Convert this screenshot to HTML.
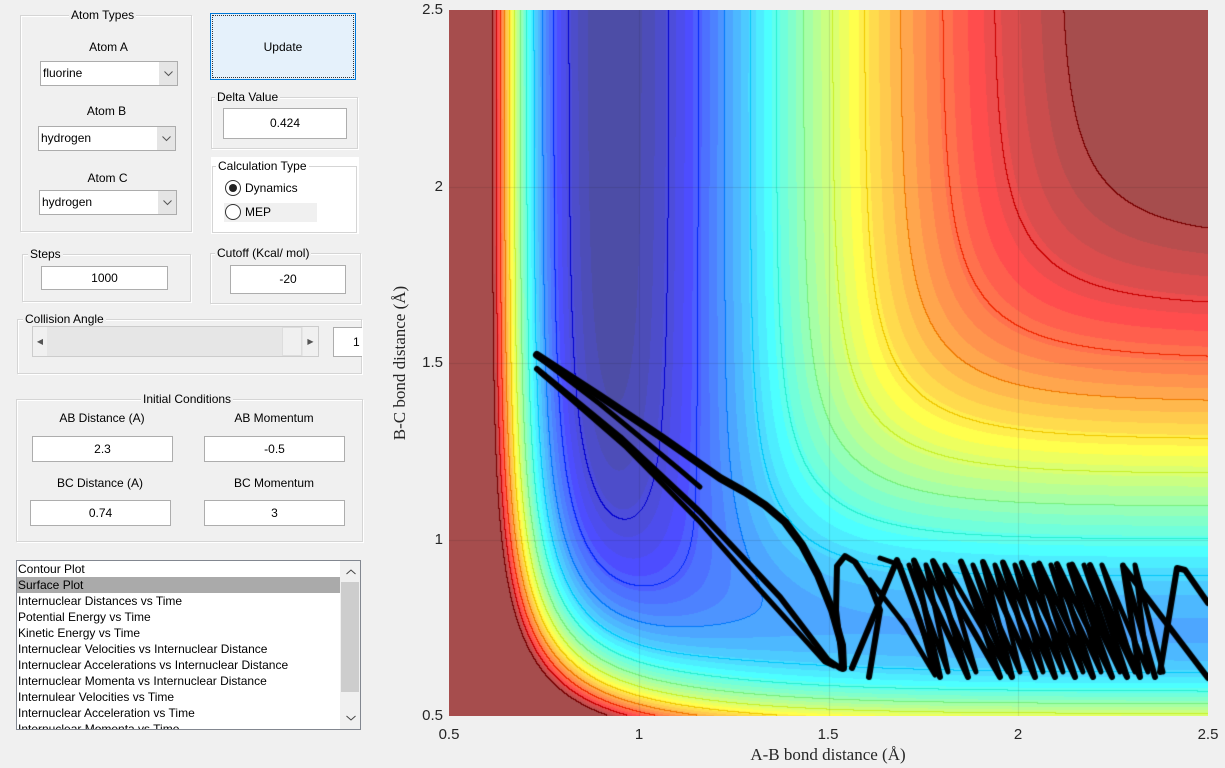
<!DOCTYPE html>
<html><head><meta charset="utf-8">
<style>
*{box-sizing:border-box}
body{margin:0;width:1225px;height:768px;background:#f0f0f0;font-family:"Liberation Sans",sans-serif;font-size:12px;color:#000;position:relative;overflow:hidden}
.a{position:absolute}
.g{position:absolute;border:1px solid #d5d5d5;box-shadow:inset 1px 1px 0 #fff,1px 1px 0 #fff}
.gt{position:absolute;top:-8px;background:#f0f0f0;padding:0 2px;line-height:14px;white-space:nowrap}
.in{position:absolute;background:#fff;border:1px solid #adadad;text-align:center;line-height:22px}
.dd{position:absolute;background:#fff;border:1px solid #acacac;line-height:22px;padding-left:2px}
.dd b{position:absolute;right:0;top:0;bottom:0;width:18px;background:#e5e5e5}
.dd b svg{position:absolute;left:5px;top:9px}
.lb{position:absolute;text-align:center;white-space:nowrap}
.tk{position:absolute;font-size:15px;color:#262626}
</style></head><body>

<div class="g" style="left:20px;top:15px;width:172px;height:217px"><span class="gt" style="left:48px">Atom Types</span></div>
<div class="lb" style="left:40px;top:40px;width:137px">Atom A</div>
<div class="dd" style="left:40px;top:61px;width:138px;height:25px">fluorine<b><svg width="9" height="6"><path d="M0.5 0.5L4.5 4.5L8.5 0.5" fill="none" stroke="#555"/></svg></b></div>
<div class="lb" style="left:38px;top:104px;width:137px">Atom B</div>
<div class="dd" style="left:38px;top:126px;width:138px;height:25px">hydrogen<b><svg width="9" height="6"><path d="M0.5 0.5L4.5 4.5L8.5 0.5" fill="none" stroke="#555"/></svg></b></div>
<div class="lb" style="left:39px;top:171px;width:137px">Atom C</div>
<div class="dd" style="left:39px;top:190px;width:138px;height:25px">hydrogen<b><svg width="9" height="6"><path d="M0.5 0.5L4.5 4.5L8.5 0.5" fill="none" stroke="#555"/></svg></b></div>

<div class="a" style="left:210px;top:13px;width:146px;height:67px;background:#e5f1fb;border:1px solid #0078d7;"><div style="position:absolute;inset:1px;border:1px dotted #333;text-align:center;line-height:62px">Update</div></div>

<div class="g" style="left:211px;top:97px;width:147px;height:52px"><span class="gt" style="left:3px">Delta Value</span></div>
<div class="in" style="left:223px;top:108px;width:124px;height:31px;line-height:29px">0.424</div>

<div class="a" style="left:211px;top:157px;width:148px;height:77px;background:#fff"></div>
<div class="g" style="left:212px;top:166px;width:145px;height:67px;background:#fff"><span class="gt" style="left:3px;background:#fff">Calculation Type</span></div>
<div class="a" style="left:224px;top:203px;width:93px;height:19px;background:#f0f0f0"></div>
<div class="a" style="left:225px;top:180px;width:16px;height:16px;border:1px solid #333;border-radius:50%;background:#fff"><div style="position:absolute;left:3px;top:3px;width:8px;height:8px;border-radius:50%;background:#222"></div></div>
<div class="a" style="left:245px;top:181px">Dynamics</div>
<div class="a" style="left:225px;top:204px;width:16px;height:16px;border:1px solid #333;border-radius:50%;background:#fff"></div>
<div class="a" style="left:245px;top:205px">MEP</div>

<div class="g" style="left:22px;top:254px;width:169px;height:48px"><span class="gt" style="left:5px">Steps</span></div>
<div class="in" style="left:41px;top:266px;width:127px;height:24px">1000</div>
<div class="g" style="left:210px;top:253px;width:151px;height:51px"><span class="gt" style="left:4px">Cutoff (Kcal/ mol)</span></div>
<div class="in" style="left:230px;top:265px;width:116px;height:29px;line-height:27px">-20</div>

<div class="g" style="left:17px;top:319px;width:345px;height:55px"><span class="gt" style="left:5px">Collision Angle</span></div>
<div class="a" style="left:32px;top:326px;width:287px;height:31px;background:#e6e6e6;border:1px solid #ccc"></div>
<div class="a" style="left:33px;top:327px;width:14px;height:29px;background:#f0f0f0;text-align:center;line-height:29px;font-size:8px;color:#555">&#9664;</div>
<div class="a" style="left:282px;top:327px;width:20px;height:29px;background:#f0f0f0;border:1px solid #ddd"></div>
<div class="a" style="left:303px;top:327px;width:15px;height:29px;background:#f0f0f0;text-align:center;line-height:29px;font-size:8px;color:#555">&#9654;</div>
<div class="in" style="left:333px;top:327px;width:29px;height:30px;line-height:28px;text-align:left;padding-left:19px;overflow:hidden;border-right:none">1</div>

<div class="g" style="left:16px;top:399px;width:347px;height:143px"><span class="gt" style="left:124px">Initial Conditions</span></div>
<div class="lb" style="left:32px;top:411px;width:140px">AB Distance (A)</div>
<div class="lb" style="left:204px;top:411px;width:140px">AB Momentum</div>
<div class="in" style="left:32px;top:436px;width:141px;height:26px;line-height:24px">2.3</div>
<div class="in" style="left:204px;top:436px;width:141px;height:26px;line-height:24px">-0.5</div>
<div class="lb" style="left:30px;top:476px;width:140px">BC Distance (A)</div>
<div class="lb" style="left:204px;top:476px;width:140px">BC Momentum</div>
<div class="in" style="left:30px;top:500px;width:141px;height:26px;line-height:24px">0.74</div>
<div class="in" style="left:204px;top:500px;width:141px;height:26px;line-height:24px">3</div>

<div class="a" style="left:16px;top:560px;width:345px;height:170px;background:#fff;border:1px solid #828790;overflow:hidden;line-height:16px">
<div style="padding-left:1px;height:16px">Contour Plot</div>
<div style="padding-left:1px;height:16px;background:#aaa;width:323px">Surface Plot</div>
<div style="padding-left:1px">Internuclear Distances vs Time</div>
<div style="padding-left:1px">Potential Energy vs Time</div>
<div style="padding-left:1px">Kinetic Energy vs Time</div>
<div style="padding-left:1px">Internuclear Velocities vs Internuclear Distance</div>
<div style="padding-left:1px">Internuclear Accelerations vs Internuclear Distance</div>
<div style="padding-left:1px">Internuclear Momenta vs Internuclear Distance</div>
<div style="padding-left:1px">Internulear Velocities vs Time</div>
<div style="padding-left:1px">Internuclear Acceleration vs Time</div>
<div style="padding-left:1px">Internuclear Momenta vs Time</div>
<div style="position:absolute;left:323px;top:0;width:20px;height:168px;background:#f0f0f0"></div>
<div style="position:absolute;left:324px;top:21px;width:18px;height:110px;background:#cdcdcd"></div>
<svg style="position:absolute;left:329px;top:8px" width="10" height="6"><path d="M0.5 5L5 1L9.5 5" fill="none" stroke="#444"/></svg>
<svg style="position:absolute;left:329px;top:154px" width="10" height="6"><path d="M0.5 1L5 5L9.5 1" fill="none" stroke="#444"/></svg>
</div>

<canvas id="c" width="759" height="706" class="a" style="left:449px;top:10px"></canvas>

<div class="tk" style="left:405px;top:1px;width:38px;text-align:right">2.5</div>
<div class="tk" style="left:405px;top:178px;width:38px;text-align:right">2</div>
<div class="tk" style="left:405px;top:354px;width:38px;text-align:right">1.5</div>
<div class="tk" style="left:405px;top:531px;width:38px;text-align:right">1</div>
<div class="tk" style="left:405px;top:707px;width:38px;text-align:right">0.5</div>
<div class="tk" style="left:429px;top:726px;width:40px;text-align:center">0.5</div>
<div class="tk" style="left:619px;top:726px;width:40px;text-align:center">1</div>
<div class="tk" style="left:808px;top:726px;width:40px;text-align:center">1.5</div>
<div class="tk" style="left:998px;top:726px;width:40px;text-align:center">2</div>
<div class="tk" style="left:1188px;top:726px;width:40px;text-align:center">2.5</div>
<div class="a" style="left:728px;top:745px;width:200px;text-align:center;font-family:'Liberation Serif',serif;font-size:17px;color:#262626">A-B bond distance (Å)</div>
<div class="a" style="left:300px;top:353px;width:200px;text-align:center;font-family:'Liberation Serif',serif;font-size:17px;color:#262626;transform:rotate(-90deg)">B-C bond distance (Å)</div>

<script>
(function(){
var cv=document.getElementById('c'),ctx=cv.getContext('2d');
var W=759,H=706;
var img=ctx.createImageData(W,H),d=img.data;
var S=0.18;
function qj(D,b,re,r){var x=Math.exp(-b*(r-re));var x2=x*x;
 return [D/4*((3+S)*x2-(2+6*S)*x), D/4*((1+3*S)*x2-(6+2*S)*x)];}
function V(u,v){
 var a=qj(141.2,2.05,0.93,u),b=qj(109.5,1.942,0.742,v),c=qj(141.2,2.05,0.93,u+v);
 var Q=a[0]+b[0]+c[0];
 var J=a[1]*a[1]+b[1]*b[1]+c[1]*c[1]-a[1]*b[1]-b[1]*c[1]-c[1]*a[1];
 return (Q-Math.sqrt(Math.max(J,0)))/(1+S);}
var cmin=-141,cmax=-24,P=1.0,NL=12,NF=40;
var E=new Float32Array(W*H);
for(var y=0;y<H;y++){var v=2.5-y/353;for(var x=0;x<W;x++){var u=0.5+x/379.5;E[y*W+x]=V(u,v);}}
function jet(t){t=Math.max(0,Math.min(1,t));
 var r=Math.max(0,Math.min(1,1.5-Math.abs(4*t-3))),g=Math.max(0,Math.min(1,1.5-Math.abs(4*t-2))),b=Math.max(0,Math.min(1,1.5-Math.abs(4*t-1)));return [r,g,b];}
function tt(e){var t=(Math.min(e,cmax)-cmin)/(cmax-cmin);t=Math.max(0,t);return Math.pow(t,P);}
function lev(e){return e>=cmax?99:Math.floor(tt(e)*NL);}
for(var y=0;y<H;y++)for(var x=0;x<W;x++){
 var i=y*W+x,e=E[i];
 var t=e>=cmax?1:Math.floor(tt(e)*NF)/NF;
 var k=lev(e);var line=false,lk=k;
 if(x+1<W){var k2=lev(E[i+1]);if(k2!=k){line=true;lk=Math.max(k,k2);}}
 if(y+1<H){var k3=lev(E[i+W]);if(k3!=k){line=true;lk=Math.max(lk,Math.max(k,k3));}}
 var c,o=i*4;
 if(line){var tl=lk>=99?1:lk/NL;c=jet(tl);
  d[o]=c[0]*240;d[o+1]=c[1]*240;d[o+2]=c[2]*250;}
 else{c=jet(t);d[o]=c[0]*178+77;d[o+1]=c[1]*178+77;d[o+2]=c[2]*178+77;}
 d[o+3]=255;}
ctx.putImageData(img,0,0);
ctx.strokeStyle='rgba(30,30,30,0.12)';ctx.lineWidth=1;
[190,379.5,569].forEach(function(x){ctx.beginPath();ctx.moveTo(Math.round(x)+.5,0);ctx.lineTo(Math.round(x)+.5,H);ctx.stroke();});
[176.5,353,529.5].forEach(function(y){ctx.beginPath();ctx.moveTo(0,Math.round(y)+.5);ctx.lineTo(W,Math.round(y)+.5);ctx.stroke();});
ctx.translate(-449,-10);
ctx.strokeStyle='#000';ctx.lineJoin='round';ctx.lineCap='round';
function pl(p,w){ctx.lineWidth=w;ctx.beginPath();ctx.moveTo(p[0],p[1]);for(var i=2;i<p.length;i+=2)ctx.lineTo(p[i],p[i+1]);ctx.stroke();}
pl([537,355,600,396,660,436,720,478,745,492,765,505,785,522,802,545,818,575,832,610,842,645,843,668],8);
pl([537,356,600,404,680,470,700,487],5);
pl([537,369,620,437,700,512,780,597,828,660,840,668],6);
pl([540,372,625,446,700,522,760,590,825,662,834,666],5);
pl([843,668,836,610,837,566,845,556,855,562,870,585,880,610,869,677],6);
var tops=[897,914,933,961,983,1003,1022,1039,1057,1072,1090,1123];
var bots=[940,968,1000,1012,1035,1055,1075,1093,1112,1127,1140,1155];
var p=[852,668];
for(var i=0;i<tops.length;i++){p.push(tops[i],560+i*0.5,bots[i],677);}
p.push(1123,566,1208,678);
pl(p,6);
var q=[];
for(var i=0;i<tops.length;i++){q.push(tops[i]+12,565,bots[i]+8,672);}
pl(q,5);
pl([1160,672,1177,568,1185,570,1208,603],6);
pl([870,580,905,625,935,675,920,620,900,565,880,558],5);
})();
</script>
</body></html>
